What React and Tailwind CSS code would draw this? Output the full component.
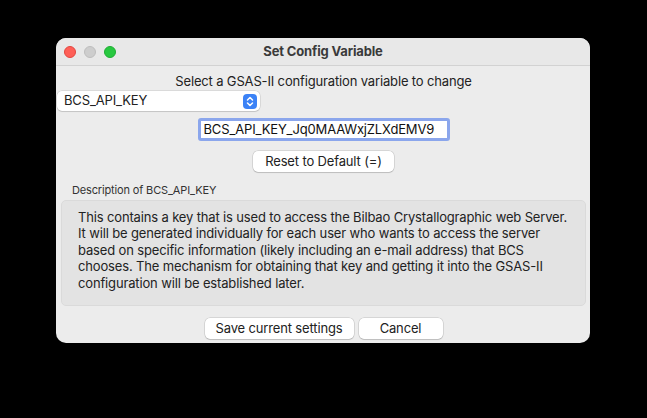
import React from "react";

const font = { fontFamily: '"Inter", "Liberation Sans", sans-serif' };

function Lights() {
    return (
        <div className="absolute left-[8px] top-[8px] flex gap-[8px]">
            <span className="w-[12px] h-[12px] rounded-full bg-[#fe5f57] border border-[#e2463f]" />
            <span className="w-[12px] h-[12px] rounded-full bg-[#cdcdcd] border border-[#bdbdbd]" />
            <span className="w-[12px] h-[12px] rounded-full bg-[#28c840] border border-[#1fad33]" />
        </div>
    );
}

function Stepper() {
    return (
        <span className="w-[14px] h-[15px] rounded-[4px] bg-[#3b82f6] flex items-center justify-center">
            <svg width="8" height="11" viewBox="0 0 8 11" fill="none" stroke="white" strokeWidth="1.5" strokeLinecap="round" strokeLinejoin="round">
                <path d="M1.5 4 L4 1.5 L6.5 4" />
                <path d="M1.5 7 L4 9.5 L6.5 7" />
            </svg>
        </span>
    );
}

const btn = "h-[21px] bg-white rounded-[5px] shadow-[0_0_0_0.5px_rgba(0,0,0,0.18),0_1px_1px_rgba(0,0,0,0.12)] text-[13px] text-[#222] flex items-center justify-center";

export default function App() {
    const lines = [
        "This contains a key that is used to access the Bilbao Crystallographic web Server.",
        "It will be generated individually for each user who wants to access the server",
        "based on specific information (likely including an e-mail address) that BCS",
        "chooses. The mechanism for obtaining that key and getting it into the GSAS-II",
        "configuration will be established later.",
    ];
    return (
        <div className="w-[647px] h-[418px] bg-black pt-[38px] pl-[56px] tracking-[-0.15px]" style={font}>
            <div className="w-[534px] h-[305px] rounded-[10px] bg-[#ececec] overflow-hidden flex flex-col">
                <div className="relative h-[28px] shrink-0 bg-[#e8e8e8] border-b border-[#d2d2d2] flex items-center justify-center">
                    <Lights />
                    <span className="text-[13px] font-bold text-[#3a3a3a]">Set Config Variable</span>
                </div>

                <div className="flex flex-col pl-[1px]">
                    <div className="h-[24px] flex items-end justify-center text-[13px] text-[#222] leading-[16px] pb-[1px]">
                        Select a GSAS-II configuration variable to change
                    </div>

                    <div className="mt-[1px] w-[203px] h-[20px] bg-white rounded-[5px] shadow-[0_0_0_0.5px_rgba(0,0,0,0.15),0_1px_1px_rgba(0,0,0,0.1)] flex items-center justify-between pl-[7px] pr-[3px]">
                        <span className="text-[13px] text-[#222]">BCS_API_KEY</span>
                        <Stepper />
                    </div>

                    <div className="mt-[7px] self-center w-[252px] h-[23px] rounded-[3px] border-[3px] border-[#8ba6ec] bg-white flex items-center pl-[3px]">
                        <span className="text-[13px] text-[#111]">BCS_API_KEY_Jq0MAAWxjZLXdEMV9</span>
                    </div>

                    <div className="mt-[10px] self-center">
                        <div className={`${btn} w-[141px]`}>Reset to Default (=)</div>
                    </div>

                    <div className="mt-[11px] pl-[15px] text-[11px] text-[#333] leading-[14px]">
                        Description of BCS_API_KEY
                    </div>

                    <div className="mt-[3px] ml-[4px] w-[525px] h-[106px] rounded-[5px] bg-[#e3e3e3] border border-[#dadada] pl-[16px] pt-[8px]">
                        {lines.map((l) => (
                            <div key={l} className="text-[13px] text-[#222] leading-[16.4px] whitespace-nowrap">{l}</div>
                        ))}
                    </div>

                    <div className="mt-[12px] flex justify-center gap-[5px]">
                        <div className={`${btn} w-[149px]`}>Save current settings</div>
                        <div className={`${btn} w-[84px]`}>Cancel</div>
                    </div>
                </div>
            </div>
        </div>
    );
}
